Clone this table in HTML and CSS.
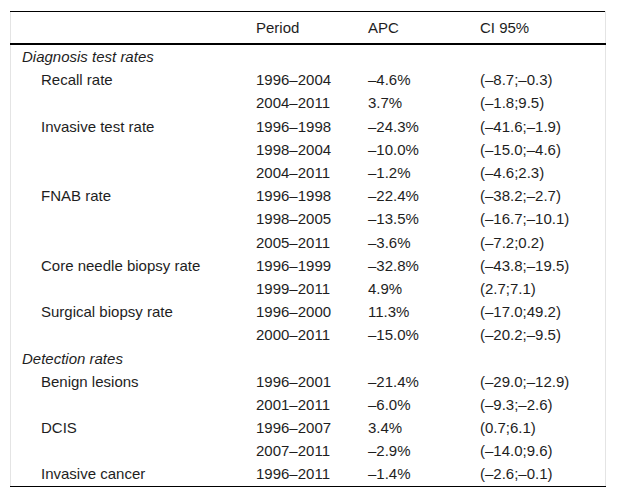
FILE: index.html
```html
<!DOCTYPE html>
<html>
<head>
<meta charset="utf-8">
<link rel="stylesheet" href="styles.css">
</head>
<body>
<table class="data">
  <thead>
    <tr><th class="lab"></th><th>Period</th><th>APC</th><th>CI 95%</th></tr>
  </thead>
  <tbody>
    <tr><td class="lab sec" colspan="4">Diagnosis test rates</td></tr>
    <tr><td class="lab ind">Recall rate</td><td>1996–2004</td><td>–4.6%</td><td>(–8.7;–0.3)</td></tr>
    <tr><td class="lab ind"></td><td>2004–2011</td><td>3.7%</td><td>(–1.8;9.5)</td></tr>
    <tr><td class="lab ind">Invasive test rate</td><td>1996–1998</td><td>–24.3%</td><td>(–41.6;–1.9)</td></tr>
    <tr><td class="lab ind"></td><td>1998–2004</td><td>–10.0%</td><td>(–15.0;–4.6)</td></tr>
    <tr><td class="lab ind"></td><td>2004–2011</td><td>–1.2%</td><td>(–4.6;2.3)</td></tr>
    <tr><td class="lab ind">FNAB rate</td><td>1996–1998</td><td>–22.4%</td><td>(–38.2;–2.7)</td></tr>
    <tr><td class="lab ind"></td><td>1998–2005</td><td>–13.5%</td><td>(–16.7;–10.1)</td></tr>
    <tr><td class="lab ind"></td><td>2005–2011</td><td>–3.6%</td><td>(–7.2;0.2)</td></tr>
    <tr><td class="lab ind">Core needle biopsy rate</td><td>1996–1999</td><td>–32.8%</td><td>(–43.8;–19.5)</td></tr>
    <tr><td class="lab ind"></td><td>1999–2011</td><td>4.9%</td><td>(2.7;7.1)</td></tr>
    <tr><td class="lab ind">Surgical biopsy rate</td><td>1996–2000</td><td>11.3%</td><td>(–17.0;49.2)</td></tr>
    <tr><td class="lab ind"></td><td>2000–2011</td><td>–15.0%</td><td>(–20.2;–9.5)</td></tr>
    <tr><td class="lab sec" colspan="4">Detection rates</td></tr>
    <tr><td class="lab ind">Benign lesions</td><td>1996–2001</td><td>–21.4%</td><td>(–29.0;–12.9)</td></tr>
    <tr><td class="lab ind"></td><td>2001–2011</td><td>–6.0%</td><td>(–9.3;–2.6)</td></tr>
    <tr><td class="lab ind">DCIS</td><td>1996–2007</td><td>3.4%</td><td>(0.7;6.1)</td></tr>
    <tr><td class="lab ind"></td><td>2007–2011</td><td>–2.9%</td><td>(–14.0;9.6)</td></tr>
    <tr><td class="lab ind">Invasive cancer</td><td>1996–2011</td><td>–1.4%</td><td>(–2.6;–0.1)</td></tr>
  </tbody>
</table>
</body>
</html>
```
FILE: styles.css
```css
html, body {
  margin: 0;
  padding: 0;
  background: #ffffff;
}
body {
  padding: 11px 0 0 10px;
  font-family: "Liberation Sans", Arial, sans-serif;
  font-size: 15px;
  color: #1e1e1e;
}
.data {
  border-collapse: collapse;
  width: 596px;
  table-layout: fixed;
  border-top: 1px solid #000;
  border-bottom: 1px solid #000;
  border-left: 1px solid #e4e4e4;
  border-right: 1px solid #e4e4e4;
}
.data th {
  font-weight: normal;
  text-align: left;
  height: 31px;
  padding: 0 10px;
  border-bottom: 2px solid #000;
  vertical-align: middle;
}
.data th:nth-child(1) { width: 215px; }
.data th:nth-child(2) { width: 92px; }
.data th:nth-child(3) { width: 92px; }
.data td {
  padding: 0 10px;
  height: 23.2px;
  line-height: 17px;
  text-align: left;
  white-space: nowrap;
  vertical-align: middle;
}
.data td.lab { padding-left: 11px; }
.data td.ind { padding-left: 30px; }
.data td.sec { font-style: italic; }
```
